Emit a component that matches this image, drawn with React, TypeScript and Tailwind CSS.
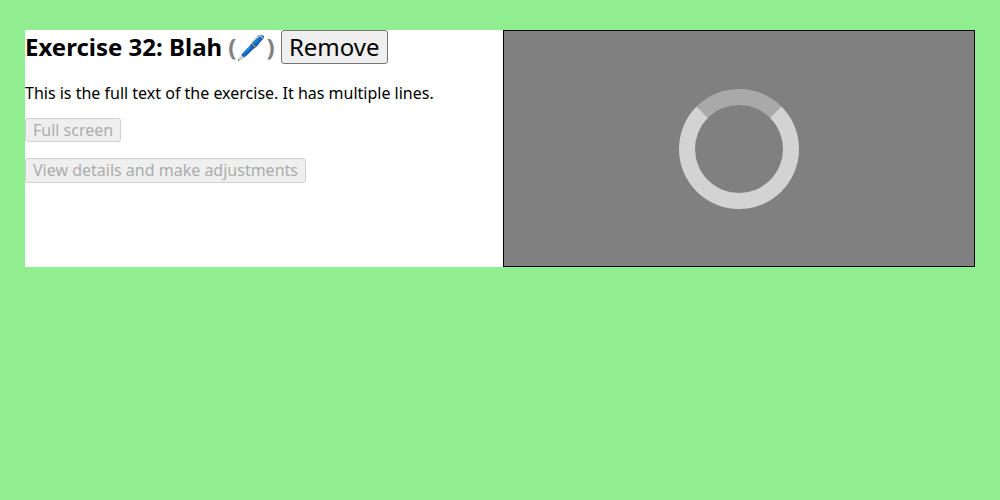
export default function App() {
  return (
    <div className="min-h-screen bg-[#90ee90] px-[25px] pt-[30px] font-['Noto_Sans',sans-serif] text-base text-black">
      <main className="grid grid-cols-[478fr_472fr]">
        <section className="bg-white">
          <h1 className="text-2xl leading-[34px] font-bold">
            Exercise 32: Blah <span className="text-[#808080]">(🖊️)</span>{' '}
            <button type="button" className="rounded-[3px] border border-[#767676] bg-[#efefef] px-[7px] align-top leading-8 font-normal text-black">Remove</button>
          </h1>
          <p className="mt-[18px] leading-[22px]">This is the full text of the exercise. It has multiple lines.</p>
          <div className="mt-[14px] flex flex-col items-start gap-4">
            <button type="button" disabled className="rounded-[3px] border border-[#d0d0d0] bg-[#efefef] px-[7px] leading-[22px] text-[#acacac]">Full screen</button>
            <button type="button" disabled className="rounded-[3px] border border-[#d0d0d0] bg-[#efefef] px-[7px] leading-[23px] text-[#acacac]">View details and make adjustments</button>
          </div>
        </section>
        <section aria-label="Loading" className="flex aspect-[472/237] items-center justify-center border border-black bg-[#808080]">
          <div className="size-[120px] rounded-full border-[16px] border-[#d3d3d3] border-t-[#a9a9a9]" />
        </section>
      </main>
    </div>
  );
}
